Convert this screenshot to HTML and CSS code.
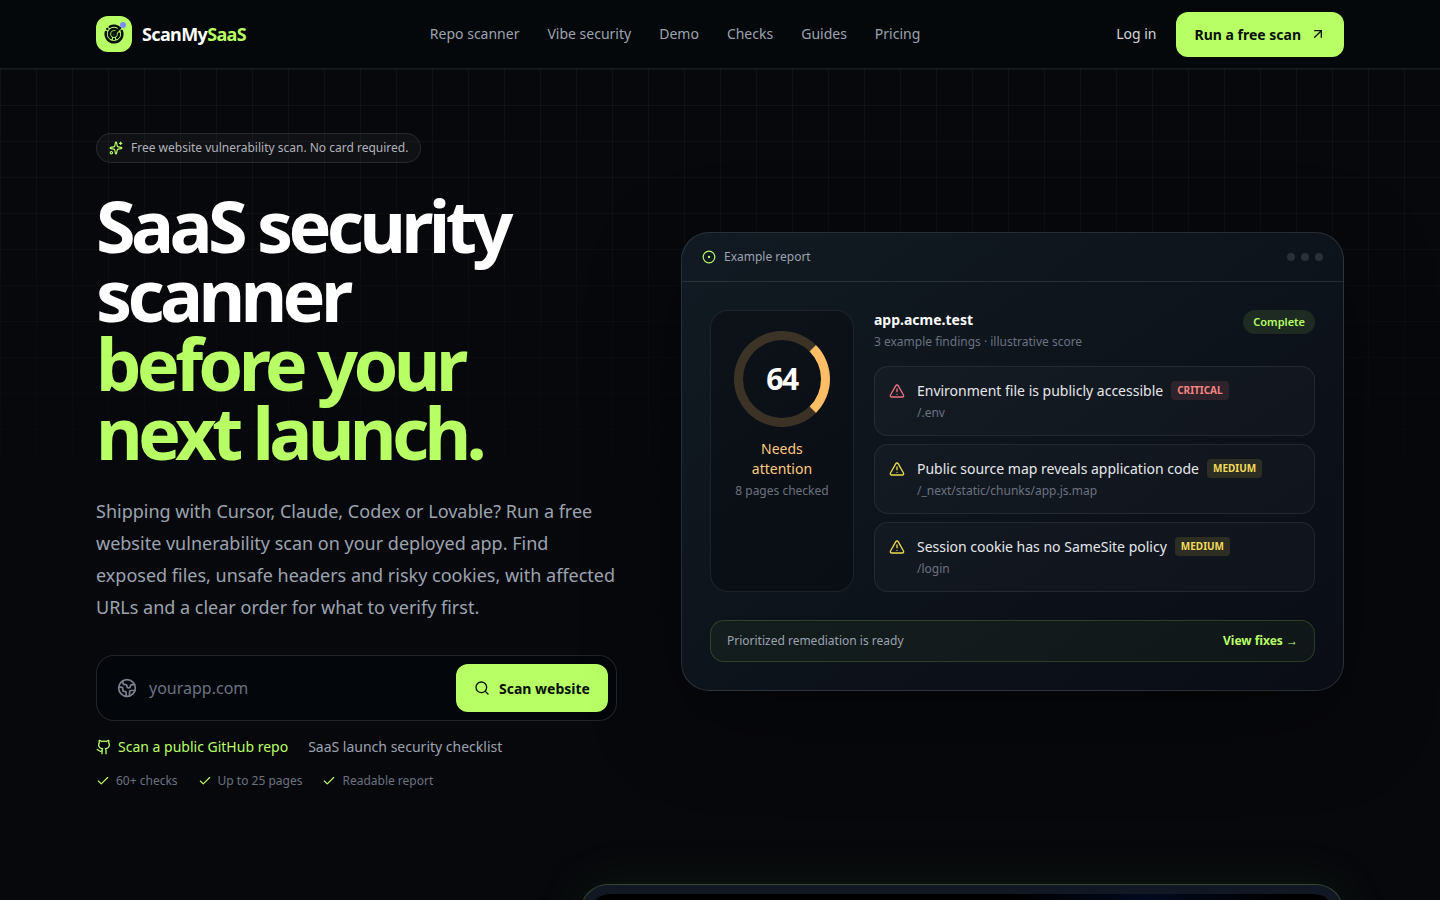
FILE: index.html
```html
<!DOCTYPE html>
<html lang="en">
<head>
  <meta charset="UTF-8">
  <meta name="viewport" content="width=device-width, initial-scale=1">
  <title>ScanMySaaS</title>
  <link rel="stylesheet" href="styles.css">
</head>

<body>
  <header class="site-header">
    <div class="container header-inner">
      <a href="#" class="brand">
        <span class="brand-mark">
          <svg class="icon icon-20 bold" viewBox="0 0 24 24">
            <path d="M19.07 4.93A10 10 0 0 0 6.99 3.34"/>
            <path d="M4 6h.01"/>
            <path d="M2.29 9.62A10 10 0 1 0 21.31 8.35"/>
            <path d="M16.24 7.76A6 6 0 1 0 8.23 16.67"/>
            <path d="M12 18h.01"/>
            <path d="M17.99 11.66A6 6 0 0 1 15.77 16.67"/>
            <circle cx="12" cy="12" r="2"/>
            <path d="m13.41 10.59 5.66-5.66"/>
          </svg>
          <span class="brand-dot"></span>
        </span>
        <span class="brand-name">ScanMy<span class="lime">SaaS</span></span>
      </a>

      <nav class="main-nav">
        <a href="#">Repo scanner</a>
        <a href="#">Vibe security</a>
        <a href="#">Demo</a>
        <a href="#">Checks</a>
        <a href="#">Guides</a>
        <a href="#">Pricing</a>
      </nav>

      <div class="header-actions">
        <a href="#" class="login">Log in</a>
        <a href="#" class="btn btn-header">
          Run a free scan
          <svg class="icon icon-16" viewBox="0 0 24 24"><path d="M7 7h10v10"/><path d="M7 17 17 7"/></svg>
        </a>
      </div>
    </div>
  </header>

  <main class="page">
    <section class="container hero">
      <div class="hero-copy">
        <p class="pill">
          <svg class="icon icon-14 lime" viewBox="0 0 24 24">
            <path d="M11.017 2.814a1 1 0 0 1 1.966 0l1.051 5.558a2 2 0 0 0 1.594 1.594l5.558 1.051a1 1 0 0 1 0 1.966l-5.558 1.051a2 2 0 0 0-1.594 1.594l-1.051 5.558a1 1 0 0 1-1.966 0l-1.051-5.558a2 2 0 0 0-1.594-1.594l-5.558-1.051a1 1 0 0 1 0-1.966l5.558-1.051a2 2 0 0 0 1.594-1.594z"/>
            <path d="M20 2v4"/>
            <path d="M22 4h-4"/>
            <circle cx="4" cy="20" r="2"/>
          </svg>
          Free website vulnerability scan. No card required.
        </p>

        <h1>SaaS security scanner <span class="lime block">before your<br>next launch.</span></h1>

        <p class="lead">Shipping with Cursor, Claude, Codex or Lovable? Run a free website vulnerability scan on your deployed app. Find exposed files, unsafe headers and risky cookies, with affected URLs and a clear order for what to verify first.</p>

        <form class="scan-form">
          <label for="url" class="scan-label" aria-label="Website address">
            <svg class="icon icon-20" viewBox="0 0 24 24">
              <path d="M21.54 15H17a2 2 0 0 0-2 2v4.54"/>
              <path d="M7 3.34V5a3 3 0 0 0 3 3a2 2 0 0 1 2 2c0 1.1.9 2 2 2a2 2 0 0 0 2-2c0-1.1.9-2 2-2h3.17"/>
              <path d="M11 21.95V18a2 2 0 0 0-2-2a2 2 0 0 1-2-2v-1a2 2 0 0 0-2-2H2.05"/>
              <circle cx="12" cy="12" r="10"/>
            </svg>
          </label>
          <input type="text" id="url" placeholder="yourapp.com">
          <button type="submit" class="btn btn-scan">
            <svg class="icon icon-16" viewBox="0 0 24 24"><path d="m21 21-4.34-4.34"/><circle cx="11" cy="11" r="8"/></svg>
            Scan website
          </button>
        </form>

        <div class="hero-links">
          <a href="#" class="repo-link">
            <svg class="icon icon-16" viewBox="0 0 24 24">
              <path d="M15 22v-4a4.8 4.8 0 0 0-1-3.5c3 0 6-2 6-5.5.08-1.25-.27-2.48-1-3.5.28-1.15.28-2.35 0-3.5 0 0-1 0-3 1.5-2.64-.5-5.36-.5-8 0C6 2 5 2 5 2c-.3 1.15-.3 2.35 0 3.5A5.403 5.403 0 0 0 4 9c0 3.5 3 5.5 6 5.5-.39.49-.68 1.05-.85 1.65-.17.6-.22 1.23-.15 1.85v4"/>
              <path d="M9 18c-4.51 2-5-2-7-2"/>
            </svg>
            Scan a public GitHub repo
          </a>
          <a href="#">SaaS launch security checklist</a>
        </div>

        <ul class="perks">
          <li><svg class="icon icon-14 lime" viewBox="0 0 24 24"><path d="M20 6 9 17l-5-5"/></svg>60+ checks</li>
          <li><svg class="icon icon-14 lime" viewBox="0 0 24 24"><path d="M20 6 9 17l-5-5"/></svg>Up to 25 pages</li>
          <li><svg class="icon icon-14 lime" viewBox="0 0 24 24"><path d="M20 6 9 17l-5-5"/></svg>Readable report</li>
        </ul>
      </div>

      <div class="report">
        <div class="report-bar">
          <span class="report-title">
            <svg class="icon icon-14 lime" viewBox="0 0 24 24"><circle cx="12" cy="12" r="10"/><circle cx="12" cy="12" r="1"/></svg>
            Example report
          </span>
          <span class="dots"><i></i><i></i><i></i></span>
        </div>

        <div class="report-body">
          <div class="report-grid">
            <div class="score">
              <div class="ring">64</div>
              <p class="score-label">Needs attention</p>
              <p class="muted">8 pages checked</p>
            </div>

            <div class="results">
              <div class="results-head">
                <div>
                  <h2>app.acme.test</h2>
                  <p class="muted">3 example findings · illustrative score</p>
                </div>
                <span class="status">Complete</span>
              </div>

              <ul class="findings">
                <li class="finding critical">
                  <svg class="icon icon-16" viewBox="0 0 24 24"><path d="m21.73 18-8-14a2 2 0 0 0-3.48 0l-8 14A2 2 0 0 0 4 21h16a2 2 0 0 0 1.73-3"/><path d="M12 9v4"/><path d="M12 17h.01"/></svg>
                  <div>
                    <p class="finding-title">Environment file is publicly accessible <span class="tag">CRITICAL</span></p>
                    <p class="muted">/.env</p>
                  </div>
                </li>
                <li class="finding medium">
                  <svg class="icon icon-16" viewBox="0 0 24 24"><path d="m21.73 18-8-14a2 2 0 0 0-3.48 0l-8 14A2 2 0 0 0 4 21h16a2 2 0 0 0 1.73-3"/><path d="M12 9v4"/><path d="M12 17h.01"/></svg>
                  <div>
                    <p class="finding-title">Public source map reveals application code <span class="tag">MEDIUM</span></p>
                    <p class="muted">/_next/static/chunks/app.js.map</p>
                  </div>
                </li>
                <li class="finding medium">
                  <svg class="icon icon-16" viewBox="0 0 24 24"><path d="m21.73 18-8-14a2 2 0 0 0-3.48 0l-8 14A2 2 0 0 0 4 21h16a2 2 0 0 0 1.73-3"/><path d="M12 9v4"/><path d="M12 17h.01"/></svg>
                  <div>
                    <p class="finding-title">Session cookie has no SameSite policy <span class="tag">MEDIUM</span></p>
                    <p class="muted">/login</p>
                  </div>
                </li>
              </ul>
            </div>
          </div>

          <div class="report-foot">
            <span>Prioritized remediation is ready</span>
            <a href="#">View fixes →</a>
          </div>
        </div>
      </div>
    </section>

    <section class="container preview">
      <div class="preview-frame">
        <div class="preview-screen"></div>
      </div>
    </section>
  </main>
</body>

</html>
```
FILE: styles.css
```css
* {
  box-sizing: border-box;
  margin: 0;
  padding: 0;
}

body {
  background: #07080c;
  color: #fff;
  font-family: "Noto Sans", "Liberation Sans", sans-serif;
  font-size: 14px;
  line-height: 20px;
}

a {
  color: inherit;
  text-decoration: none;
}

ul {
  list-style: none;
}

.container {
  width: 100%;
  max-width: 1280px;
  margin: 0 auto;
  padding: 0 16px;
}

.lime {
  color: #b8ff66;
}

.block {
  display: block;
}

.muted {
  color: #6b7280;
  font-size: 12px;
  line-height: 16px;
}

/* icons */
.icon {
  flex: none;
  fill: none;
  stroke: currentColor;
  stroke-width: 2;
  stroke-linecap: round;
  stroke-linejoin: round;
}

.icon-14 {
  width: 14px;
  height: 14px;
}

.icon-16 {
  width: 16px;
  height: 16px;
}

.icon-20 {
  width: 20px;
  height: 20px;
}

.bold {
  stroke-width: 3;
}

.btn {
  display: flex;
  align-items: center;
  gap: 9px;
  border: 0;
  border-radius: 12px;
  background: #b8ff66;
  color: #07110a;
  font-family: inherit;
  font-size: 14px;
  font-weight: 700;
  line-height: 21px;
  white-space: nowrap;
  cursor: pointer;
}

/* header */
.site-header {
  background: #04080b;
  border-bottom: 1px solid #181c1f;
}

.header-inner {
  display: flex;
  align-items: center;
  justify-content: space-between;
  height: 68px;
}

.brand {
  display: flex;
  align-items: center;
  gap: 10px;
}

.brand-mark {
  position: relative;
  display: grid;
  place-items: center;
  width: 36px;
  height: 36px;
  border-radius: 12px;
  background: #b8ff66;
  color: #07110a;
}

.brand-dot {
  position: absolute;
  top: 6px;
  right: 6px;
  width: 6px;
  height: 6px;
  border-radius: 50%;
  background: #7c8cff;
}

.brand-name {
  font-size: 18px;
  font-weight: 700;
  line-height: 28px;
  letter-spacing: -0.035em;
}

.main-nav {
  display: flex;
  gap: 28px;
  color: #9ca3af;
}

.header-actions {
  display: flex;
  align-items: center;
  gap: 8px;
}

.login {
  padding: 0 12px;
  color: #d1d5db;
}

.btn-header {
  padding: 12px 18px;
}

/* hero */
.page {
  position: relative;
  overflow: hidden;
}

.page::before {
  content: "";
  position: absolute;
  top: 0;
  left: 0;
  right: 0;
  height: 720px;
  background-image:
    linear-gradient(to right, rgba(255, 255, 255, 0.045) 1px, transparent 1px),
    linear-gradient(to bottom, rgba(255, 255, 255, 0.045) 1px, transparent 1px);
  background-size: 36px 36px;
  -webkit-mask-image: linear-gradient(to bottom, #000, transparent 70%);
  mask-image: linear-gradient(to bottom, #000, transparent 70%);
}

.hero {
  position: relative;
  display: grid;
  grid-template-columns: 0.88fr 1.12fr;
  align-items: center;
  gap: 64px;
  padding-top: 64px;
  padding-bottom: 48px;
}

.pill {
  display: inline-flex;
  align-items: center;
  gap: 8px;
  padding: 6px 12px;
  border: 1px solid rgba(255, 255, 255, 0.1);
  border-radius: 15px;
  background: rgba(255, 255, 255, 0.04);
  color: #b0b3ba;
  font-size: 12px;
  line-height: 16px;
  vertical-align: top;
}

h1 {
  margin-top: 28px;
  font-size: 72px;
  font-weight: 700;
  line-height: 69px;
  letter-spacing: -0.065em;
}

.lead {
  margin-top: 28px;
  color: #9ca3af;
  font-size: 18px;
  line-height: 32px;
}

.scan-form {
  display: flex;
  align-items: center;
  margin-top: 32px;
  padding: 8px;
  border: 1px solid rgba(255, 255, 255, 0.12);
  border-radius: 18px;
  background: #03060b;
}

.scan-label {
  display: flex;
  padding: 0 12px;
  color: #7b8190;
}

.scan-form input {
  flex: 1;
  min-width: 0;
  height: 48px;
  border: 0;
  outline: 0;
  background: transparent;
  color: #fff;
  font-family: inherit;
  font-size: 16px;
}

.scan-form input::placeholder {
  color: #6b7280;
}

.btn-scan {
  height: 48px;
  padding: 0 18px;
}

.hero-links {
  display: flex;
  flex-wrap: wrap;
  gap: 20px;
  margin-top: 16px;
  color: #9ca3af;
}

.repo-link {
  display: flex;
  align-items: center;
  gap: 6px;
  color: #b8ff66;
}

.perks {
  display: flex;
  flex-wrap: wrap;
  gap: 20px;
  margin-top: 16px;
  color: #6b7280;
  font-size: 12px;
  line-height: 16px;
}

.perks li {
  display: flex;
  align-items: center;
  gap: 6px;
}

/* report card */
.report {
  border: 1px solid rgba(255, 255, 255, 0.12);
  border-radius: 28px;
  background: linear-gradient(145deg, #111a22, #0a0d15);
  box-shadow: 0 28px 90px rgba(0, 0, 0, 0.38);
}

.report-bar {
  display: flex;
  align-items: center;
  justify-content: space-between;
  padding: 16px 20px;
  border-bottom: 1px solid rgba(255, 255, 255, 0.1);
}

.report-title {
  display: flex;
  align-items: center;
  gap: 8px;
  color: #9ca3af;
  font-size: 12px;
  line-height: 16px;
}

.dots {
  display: flex;
  gap: 6px;
}

.dots i {
  width: 8px;
  height: 8px;
  border-radius: 50%;
  background: rgba(255, 255, 255, 0.12);
}

.report-body {
  padding: 28px;
}

.report-grid {
  display: grid;
  grid-template-columns: 144px 1fr;
  gap: 20px;
}

.score {
  padding: 20px;
  border: 1px solid rgba(255, 255, 255, 0.08);
  border-radius: 18px;
  background: rgba(0, 0, 0, 0.25);
  text-align: center;
}

.ring {
  display: grid;
  place-items: center;
  width: 96px;
  height: 96px;
  margin: 0 auto;
  border: 9px solid rgba(255, 189, 102, 0.2);
  border-right-color: #ffbd66;
  border-radius: 50%;
  font-size: 30px;
  font-weight: 700;
  letter-spacing: -0.05em;
}

.score-label {
  margin: 12px 0 4px;
  color: #ffc97f;
}

.results-head {
  display: flex;
  align-items: flex-start;
  justify-content: space-between;
}

h2 {
  margin-bottom: 4px;
  font-size: 14px;
  font-weight: 700;
  line-height: 20px;
}

.status {
  padding: 4px 10px;
  border-radius: 12px;
  background: rgba(184, 255, 102, 0.1);
  color: #b8ff66;
  font-size: 11px;
  font-weight: 600;
  line-height: 16px;
}

.findings {
  display: grid;
  gap: 8px;
  margin-top: 16px;
}

.finding {
  display: flex;
  gap: 12px;
  padding: 14px;
  border: 1px solid rgba(255, 255, 255, 0.08);
  border-radius: 14px;
  background: rgba(255, 255, 255, 0.025);
}

.finding .icon {
  margin-top: 2px;
}

.finding-title {
  display: flex;
  flex-wrap: wrap;
  align-items: center;
  gap: 8px;
  margin-bottom: 4px;
  color: #e5e7eb;
}

.tag {
  padding: 2px 6px;
  border-radius: 4px;
  font-size: 10px;
  font-weight: 700;
  line-height: 15px;
}

.critical .icon {
  color: #f0717f;
}

.critical .tag {
  background: rgba(248, 113, 113, 0.12);
  color: #f58585;
}

.medium .icon {
  color: #ecd94e;
}

.medium .tag {
  background: rgba(253, 224, 71, 0.12);
  color: #f2da5c;
}

.report-foot {
  display: flex;
  align-items: center;
  justify-content: space-between;
  margin-top: 28px;
  padding: 12px 16px;
  border: 1px solid rgba(184, 255, 102, 0.16);
  border-radius: 14px;
  background: rgba(184, 255, 102, 0.04);
  color: #9ca3af;
  font-size: 12px;
  line-height: 16px;
}

.report-foot a {
  color: #b8ff66;
  font-weight: 700;
}

/* product preview */
.preview {
  position: relative;
  display: grid;
  grid-template-columns: 0.55fr 1fr;
  gap: 64px;
  padding-top: 47px;
  padding-bottom: 96px;
}

.preview-frame {
  grid-column: 2;
  padding: 9px;
  border: 1px solid rgba(184, 255, 102, 0.2);
  border-radius: 28px;
  background: #111824;
  box-shadow: 0 0 50px rgba(70, 130, 30, 0.12);
}

.preview-screen {
  aspect-ratio: 16 / 9;
  border-radius: 20px;
  background: radial-gradient(circle at 75% 0, #020a1e, #000 20%);
}

@media (max-width: 1000px) {
  .main-nav {
    display: none;
  }

  .hero,
  .preview {
    grid-template-columns: 1fr;
  }

  .preview-frame {
    grid-column: 1;
  }
}
```
